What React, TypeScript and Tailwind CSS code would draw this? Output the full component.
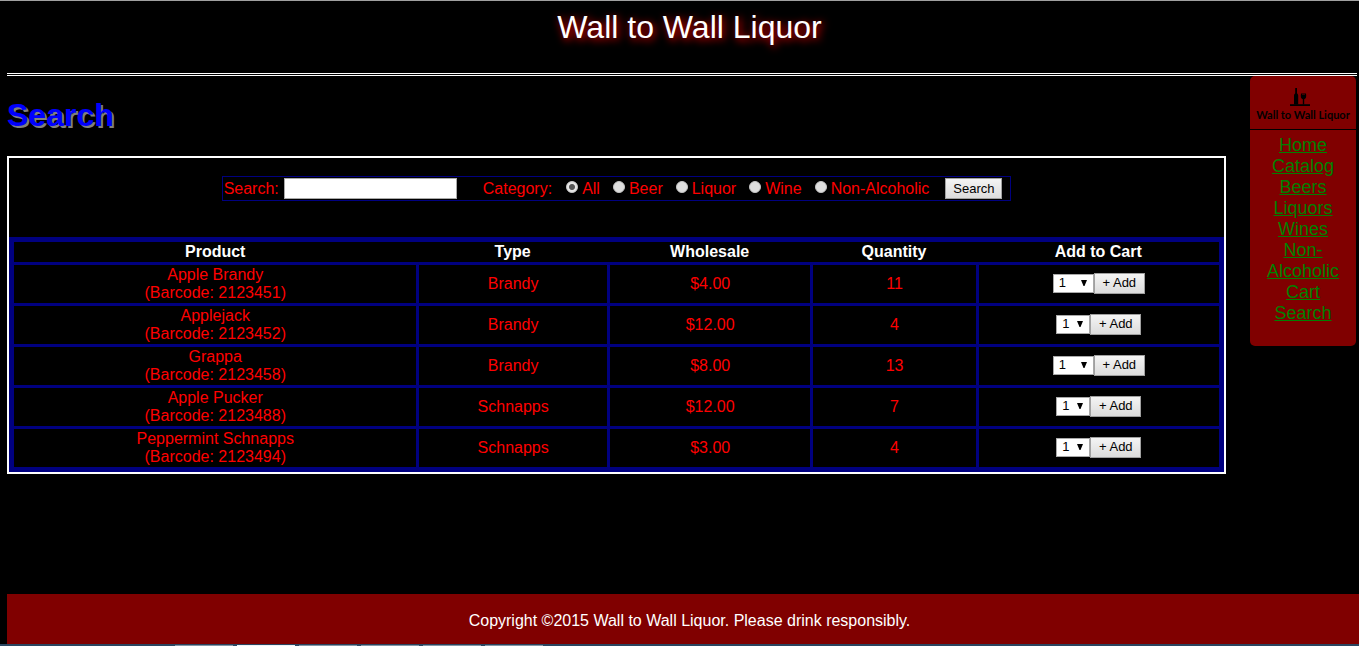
import { useState } from "react";

type Product = {
  name: string;
  barcode: string;
  type: string;
  price: string;
  quantity: number;
};

const products: Product[] = [
  { name: "Apple Brandy", barcode: "2123451", type: "Brandy", price: "$4.00", quantity: 11 },
  { name: "Applejack", barcode: "2123452", type: "Brandy", price: "$12.00", quantity: 4 },
  { name: "Grappa", barcode: "2123458", type: "Brandy", price: "$8.00", quantity: 13 },
  { name: "Apple Pucker", barcode: "2123488", type: "Schnapps", price: "$12.00", quantity: 7 },
  { name: "Peppermint Schnapps", barcode: "2123494", type: "Schnapps", price: "$3.00", quantity: 4 },
];

const categories = ["All", "Beer", "Liquor", "Wine", "Non-Alcoholic"];

const links = ["Home", "Catalog", "Beers", "Liquors", "Wines", "Non-Alcoholic", "Cart", "Search"];

const taskbarItems = [
  "bg-[#8494a3]",
  "bg-[#eef2f5]",
  "bg-[#8494a3]",
  "bg-[#8494a3]",
  "bg-[#8494a3]",
  "bg-[#8494a3]",
];

const buttonClass =
  "h-[21px] border border-[#a0a0a0] bg-linear-to-b from-[#f4f4f4] to-[#dcdcdc] text-[13px] leading-4 text-black";

function BottleLogo() {
  return (
    <svg viewBox="0 0 20 18" className="mr-1.5 h-[18px] w-5" fill="#000" aria-hidden="true">
      <path d="M5.200 0h1.800v5c0 .8 1.200 1 1.200 2.500v9H4v-9C4 6 5.200 5.800 5.200 5z" />
      <path d="M11 5.500h5c.5 3.400.2 5.200-1.800 5.800v5.200h-1.400v-5.200c-2-.6-2.300-2.400-1.800-5.800z" />
      <path d="M0 16.200h20V18H0z" />
      <path d="M12 6.200h3v.8h-3z" fill="#500000" />
    </svg>
  );
}

function SearchForm() {
  const [category, setCategory] = useState("All");
  return (
    <form
      className="mx-auto mb-9 flex w-fit items-center border border-[#000080] py-px pr-2 pl-px text-[#f00]"
      onSubmit={(e) => e.preventDefault()}
    >
      <label htmlFor="query">Search:</label>
      <input
        id="query"
        type="text"
        className="mr-[26px] ml-[5px] h-[21px] w-[173px] border border-[#a9a9a9] bg-white px-0.5 text-[13px] text-black"
      />
      <fieldset className="flex items-center">
        <legend className="float-left mr-3.5">Category:</legend>
        <div className="flex gap-[13px]">
          {categories.map((name) => (
            <label key={name} className="flex items-center gap-1">
              <input
                type="radio"
                name="category"
                value={name}
                checked={category === name}
                onChange={() => setCategory(name)}
                className="mb-1 size-3 appearance-none rounded-full border border-[#c4c4c4] bg-[#dedede] checked:bg-radial checked:from-[#555] checked:from-35% checked:to-[#e6e6e6] checked:to-50%"
              />
              {name}
            </label>
          ))}
        </div>
      </fieldset>
      <button type="submit" className={`ml-4 w-[57px] ${buttonClass}`}>
        Search
      </button>
    </form>
  );
}

function QuantityPicker({ product }: { product: Product }) {
  const options = Array.from({ length: product.quantity }, (_, i) => i + 1);
  return (
    <div className="flex items-center justify-center pb-0.5">
      <div className="relative flex">
        <select
          aria-label={`Quantity of ${product.name}`}
          defaultValue={1}
          className={`h-[19px] appearance-none border border-[#a9a9a9] bg-white pl-[5px] text-[13px] leading-4 text-black ${
            product.quantity > 9 ? "w-[41px]" : "w-[34px]"
          }`}
        >
          {options.map((n) => (
            <option key={n}>{n}</option>
          ))}
        </select>
        <svg
          viewBox="0 0 6 6"
          className="pointer-events-none absolute top-1.5 right-[7px] size-1.5"
          aria-hidden="true"
        >
          <path d="M0 0h6L3.500 6h-1z" />
        </svg>
      </div>
      <button type="button" className={`w-[51px] ${buttonClass}`}>
        + Add
      </button>
    </div>
  );
}

function ProductTable() {
  const head = "border-b-3 border-[#000080] p-px font-bold text-white not-first:pl-[3px]";
  const cell = "border-b-3 border-l-3 border-[#000080] p-px group-last:border-b-0";
  return (
    <table className="w-full table-fixed border-separate border-spacing-0 border-5 border-[#000080] text-center">
      <colgroup>
        <col className="w-[33.4%]" />
        <col className="w-[15.8%]" />
        <col className="w-[16.9%]" />
        <col className="w-[13.7%]" />
        <col className="w-[20.2%]" />
      </colgroup>
      <thead>
        <tr>
          <th className={head}>Product</th>
          <th className={head}>Type</th>
          <th className={head}>Wholesale</th>
          <th className={head}>Quantity</th>
          <th className={head}>Add to Cart</th>
        </tr>
      </thead>
      <tbody className="text-[#f00]">
        {products.map((product) => (
          <tr key={product.barcode} className="group">
            <td className="border-b-3 border-[#000080] p-px group-last:border-b-0">
              {product.name}
              <br />
              (Barcode: {product.barcode})
            </td>
            <td className={cell}>{product.type}</td>
            <td className={cell}>{product.price}</td>
            <td className={cell}>{product.quantity}</td>
            <td className={cell}>
              <QuantityPicker product={product} />
            </td>
          </tr>
        ))}
      </tbody>
    </table>
  );
}

function Sidebar() {
  return (
    <aside className="mr-[3px] w-[106px] shrink-0 rounded-[5px] bg-[#800000] pb-[22px] text-center">
      <div className="flex flex-col items-center border-b border-black pt-3 pb-1.5">
        <BottleLogo />
        <span className="mt-px font-['Lato',sans-serif] text-[11px] leading-4 font-bold whitespace-nowrap text-black">
          Wall to Wall Liquor
        </span>
      </div>
      <nav className="px-2 pt-[5px]">
        <ul className="text-lg leading-[21px]">
          {links.map((link) => (
            <li key={link}>
              <a href="#" className="text-[#008000] underline">
                {link}
              </a>
            </li>
          ))}
        </ul>
      </nav>
    </aside>
  );
}

export default function App() {
  return (
    <div className="flex min-h-screen flex-col border-t border-[#a0a0a0] bg-black font-['Liberation_Sans',Arial,sans-serif] text-base leading-[18px] text-white">
      <header className="mr-0.5 ml-[7px] border-b-3 border-double border-white pt-2 pb-7 pl-[15px] text-center text-[32px] leading-9">
        <span className="text-shadow-[2px_2px_8px_#f00]">Wall to Wall Liquor</span>
      </header>
      <div className="flex items-start gap-6 pl-[7px]">
        <main className="min-w-0 flex-1 pt-[21px]">
          <h1 className="mb-[22px] text-[32px] leading-[37px] font-bold text-[#00f] text-shadow-[2px_2px_0_#808080]">
            Search
          </h1>
          <section className="border-2 border-white pt-[18px]">
            <SearchForm />
            <ProductTable />
          </section>
        </main>
        <Sidebar />
      </div>
      <footer className="mt-auto ml-[7px] bg-[#800000] pt-[18px] pb-3.5 pl-[13px] text-center">
        <p>Copyright ©2015 Wall to Wall Liquor. Please drink responsibly.</p>
      </footer>
      <div className="flex gap-1 bg-[#2b4560] pt-px pl-[175px]">
        {taskbarItems.map((color, i) => (
          <span key={i} className={`h-px w-[58px] ${color}`} />
        ))}
      </div>
    </div>
  );
}
